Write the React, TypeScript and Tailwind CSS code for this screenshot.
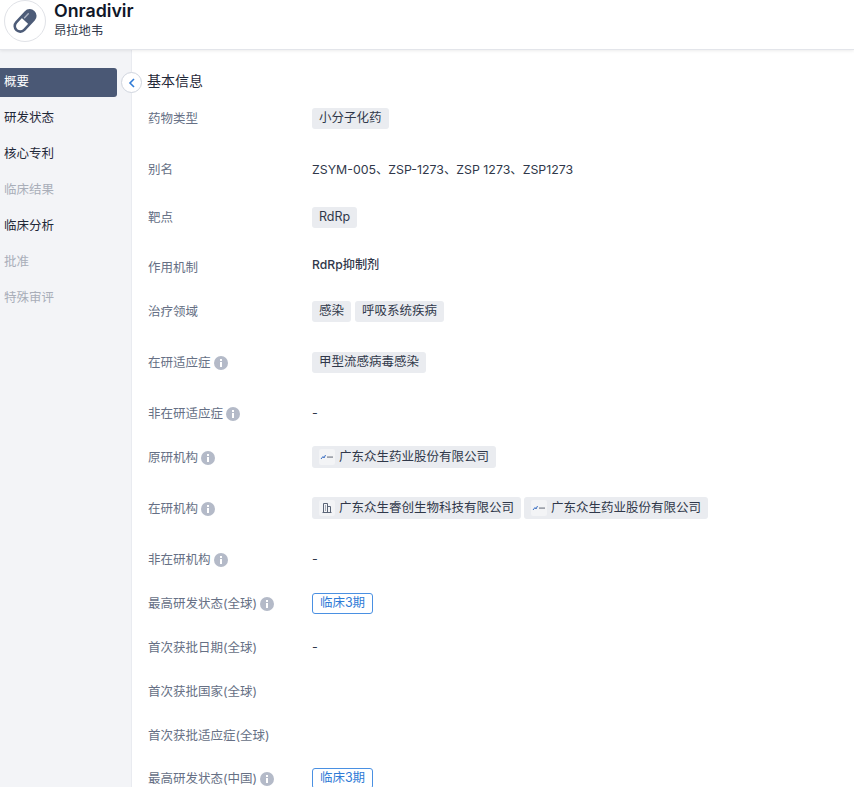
import React from "react";

const Info = () => (
  <svg width="14" height="14" viewBox="0 0 14 14" className="-ml-[1px] -mt-[1px] shrink-0">
    <circle cx="7" cy="7" r="7" fill="#b4bac8" />
    <rect x="6" y="6" width="2" height="5" fill="#fff" />
    <rect x="6" y="3" width="2" height="2" fill="#fff" />
  </svg>
);

const Tag = ({ children }: { children: React.ReactNode }) => (
  <span className="inline-flex h-[21px] items-center rounded-[3px] bg-[#eaecf0] px-[7px] text-[12.5px] text-[#30384a]">{children}</span>
);

const Org = ({ name, kind }: { name: string; kind: "logo" | "building" }) => (
  <span className="inline-flex h-[22px] items-center gap-[4px] rounded-[3px] bg-[#eaecf0] pl-[7px] pr-[7px] text-[12.5px] text-[#30384a]">
    <span className="flex h-[16px] w-[16px] items-center justify-center rounded-[2px] bg-[#f3f4f6]">
      {kind === "logo" ? (
        <svg width="14" height="8" viewBox="0 0 14 8">
          <path d="M1 6 L3 3.5 L4 5 L5.5 2" stroke="#3b6fc4" strokeWidth="1" fill="none" />
          <rect x="7" y="3.4" width="6" height="1.4" fill="#8a8f99" />
        </svg>
      ) : (
        <svg width="12" height="12" viewBox="0 0 12 12" fill="none" stroke="#5b6577" strokeWidth="1">
          <path d="M2.5 10.5V1.5H6.5V10.5M6.5 4.5H9.5V10.5M1.5 10.5H10.5" />
          <path d="M4 4H5M4 6H5M4 8H5" />
        </svg>
      )}
    </span>
    {name}
  </span>
);

const Phase = () => (
  <span className="inline-flex h-[21px] w-[61px] items-center justify-center rounded-[3px] border border-[#4a90e2] bg-white text-[12.5px] text-[#2f7bd6]">临床3期</span>
);

const Dash = () => <span className="text-[12.5px] text-[#30384a]">-</span>;

const rows: { label: string; info?: boolean; h: string; value?: React.ReactNode }[] = [
  { label: "药物类型", h: "h-[51px]", value: <Tag>小分子化药</Tag> },
  { label: "别名", h: "h-[48px]", value: <span className="pt-[2px] text-[12.35px] text-[#30384a]">ZSYM-005、ZSP-1273、ZSP 1273、ZSP1273</span> },
  { label: "靶点", h: "h-[50px]", value: <Tag>RdRp</Tag> },
  { label: "作用机制", h: "h-[44px]", value: <span className="mb-[3px] text-[12.2px] font-medium text-[#30384a]">RdRp抑制剂</span> },
  { label: "治疗领域", h: "h-[51px]", value: <><Tag>感染</Tag><Tag>呼吸系统疾病</Tag></> },
  { label: "在研适应症", info: true, h: "h-[51px]", value: <Tag>甲型流感病毒感染</Tag> },
  { label: "非在研适应症", info: true, h: "h-[44px]", value: <Dash /> },
  { label: "原研机构", info: true, h: "h-[51px]", value: <Org kind="logo" name="广东众生药业股份有限公司" /> },
  {
    label: "在研机构",
    info: true,
    h: "h-[51px]",
    value: (
      <>
        <Org kind="building" name="广东众生睿创生物科技有限公司" />
        <span className="-ml-[1px] inline-flex">
          <Org kind="logo" name="广东众生药业股份有限公司" />
        </span>
      </>
    ),
  },
  { label: "非在研机构", info: true, h: "h-[44px]", value: <Dash /> },
  { label: "最高研发状态(全球)", info: true, h: "h-[44px]", value: <Phase /> },
  { label: "首次获批日期(全球)", h: "h-[44px]", value: <Dash /> },
  { label: "首次获批国家(全球)", h: "h-[44px]" },
  { label: "首次获批适应症(全球)", h: "h-[43px]" },
  { label: "最高研发状态(中国)", info: true, h: "h-[44px]", value: <Phase /> },
];

const nav = [
  { t: "概要", active: true },
  { t: "研发状态" },
  { t: "核心专利" },
  { t: "临床结果", off: true },
  { t: "临床分析" },
  { t: "批准", off: true },
  { t: "特殊审评", off: true },
];

export default function App() {
  return (
    <div className="flex h-[787px] w-[854px] flex-col overflow-hidden bg-white font-['Inter','Noto_Sans_CJK_SC',sans-serif]">
      <header className="relative z-10 flex h-[50px] shrink-0 items-start gap-[8px] border-b border-[#e3e5ea] bg-white pl-[4px] shadow-[0_1px_3px_rgba(0,0,0,0.08)]">
        <div className="flex h-[42px] w-[42px] shrink-0 items-center justify-center rounded-full border border-[#e0e2e7] bg-white">
          <svg width="32" height="32" viewBox="0 0 32 32">
            <g transform="rotate(-47 16 16)">
              <rect x="3.5" y="10.5" width="25" height="11" rx="5.5" fill="#fff" stroke="#4d5c78" strokeWidth="2.6" />
              <path d="M16 10.5H23A5.5 5.5 0 0 1 23 21.5H16Z" fill="#4d5c78" />
              <path d="M18 13.5H23.5" stroke="#aeb6c6" strokeWidth="1.4" strokeLinecap="round" />
            </g>
          </svg>
        </div>
        <div className="flex flex-col">
          <span className="text-[17.8px] font-semibold leading-[21px] text-[#0f1728]">Onradivir</span>
          <span className="mt-[2px] text-[12.3px] leading-[16px] text-[#30384a]">昂拉地韦</span>
        </div>
      </header>
      <div className="flex min-h-0 flex-1">
        <aside className="flex w-[132px] shrink-0 flex-col border-r border-[#e9ebf0] bg-[#f3f4f7] pt-[18px]">
          {nav.map((n) => (
            <div
              key={n.t}
              className={
                n.active
                  ? "mb-[7px] flex h-[29px] w-[117px] items-center rounded-r-[3px] bg-[#4a5875] pl-[4px] text-[12.5px] text-white"
                  : n.off
                  ? "mb-[7px] flex h-[29px] items-center pl-[4px] text-[12.5px] text-[#a9aeb9]"
                  : "mb-[7px] flex h-[29px] items-center pl-[4px] text-[12.5px] text-[#1f2838]"
              }
            >
              {n.t}
            </div>
          ))}
        </aside>
        <main className="relative min-w-0 flex-1 pl-[15px]">
          <button className="absolute left-[-11px] top-[22px] flex h-[21px] w-[21px] items-center justify-center rounded-full border border-[#d0d5de] bg-white">
            <svg width="10" height="12" viewBox="0 0 10 12" fill="none" stroke="#2f7bd6" strokeWidth="1.6">
              <path d="M7 2 L3 6 L7 10" />
            </svg>
          </button>
          <h2 className="mt-[18px] flex h-[24px] items-center text-[14px] font-normal text-[#1f2838]">基本信息</h2>
          <div className="mt-[14px]">
            {rows.map((r) => (
              <div key={r.label} className={`flex items-start ${r.h}`}>
                <div className="flex h-[24px] w-[165px] shrink-0 items-center gap-[4px] pl-[1px] pt-[2px] text-[12.5px] text-[#667085]">
                  <span>{r.label}</span>
                  {r.info && <Info />}
                </div>
                <div className="flex h-[24px] items-center gap-[4px]">{r.value}</div>
              </div>
            ))}
          </div>
        </main>
      </div>
    </div>
  );
}
